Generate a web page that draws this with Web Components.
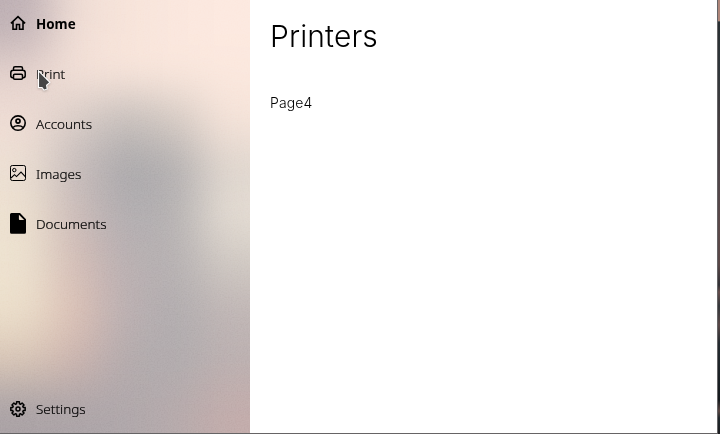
<!DOCTYPE html>
<html lang="en">
<head>
<meta charset="utf-8">
<title>Printers</title>
<style>
html,body{margin:0;width:720px;height:434px;overflow:hidden;background:#fff}
</style>
</head>
<body>
<app-window>
  <nav-pane slot="nav">
    <nav-item icon="home" active>Home</nav-item>
    <nav-item icon="print">Print</nav-item>
    <nav-item icon="account">Accounts</nav-item>
    <nav-item icon="image">Images</nav-item>
    <nav-item icon="document">Documents</nav-item>
    <nav-item icon="settings" slot="footer">Settings</nav-item>
  </nav-pane>
  <content-page heading="Printers">Page4</content-page>
</app-window>
<script>
const make = (host, html) => {
  host.attachShadow({mode:'open'}).innerHTML = html;
};

// Colour samples of the acrylic backdrop, one row per 48px and one column per 50px.
const tones = [
  ['#bfb1b5','#efddd5','#f7e4da','#fae7de','#fce9e0'],
  ['#e3d1cc','#f4e1d8','#f8e5db','#fae7dd','#fbe8de'],
  ['#efddd5','#d9cdc7','#c5bebb','#d4cac3','#f5e3d9'],
  ['#ecdfd3','#c7bdbc','#aaa8ab','#b2afb0','#dfd6ce'],
  ['#ede1d0','#cdbcb9','#b2aeb1','#b6b2b2','#e4dcd3'],
  ['#ede2d0','#d5beb7','#bab0b2','#b6b1b2','#d0c9c3'],
  ['#ecdfcb','#dcc1b6','#bcb0b2','#b1adaf','#c0b6b5'],
  ['#d9c6b7','#cdb5af','#b4abad','#b0acae','#bcb1b1'],
  ['#aba3a6','#ada5a8','#b0a8ab','#b6abac','#c3adac']
];

class AcrylicBackdrop extends HTMLElement {
  connectedCallback() {
    const last = tones.length - 1;
    let cells = '';
    for (let r = -2; r <= last + 2; r++)
      for (let c = -2; c <= 6; c++) {
        const fill = tones[Math.min(last, Math.max(0, r))][Math.min(4, Math.max(0, c))];
        cells += `<rect x="${c*50}" y="${r*48}" width="51" height="49" fill="${fill}"/>`;
      }
    make(this, `<style>:host{display:block;overflow:hidden}svg{display:block}</style>
    <svg width="250" height="434" viewBox="0 0 250 434">
      <defs>
        <filter id="soft" filterUnits="userSpaceOnUse" x="-100" y="-96" width="450" height="626" color-interpolation-filters="sRGB"><feGaussianBlur stdDeviation="22"/></filter>
        <filter id="grain" filterUnits="userSpaceOnUse" x="0" y="0" width="250" height="434" color-interpolation-filters="sRGB"><feTurbulence type="fractalNoise" baseFrequency=".7" numOctaves="2" seed="4"/><feColorMatrix values="1 0 0 0 0  1 0 0 0 0  1 0 0 0 0  0 0 0 0 1"/></filter>
      </defs>
      <g filter="url(#soft)">${cells}</g>
      <rect width="250" height="434" filter="url(#grain)" opacity=".14" style="mix-blend-mode:soft-light"/>
    </svg>`);
  }
}
customElements.define('acrylic-backdrop', AcrylicBackdrop);

const icons = {
  home: '<path d="M1.900 9.300 9 2.600l7.100 6.700M4 8v7.200h3.500v-4.700h3v4.700H14V8" stroke-width="1.600"/>',
  print: '<path d="M4.500 6.200V4.200q0-1.500 1.500-1.500h6q1.500 0 1.500 1.500v2M4.500 13.700H3.700q-1.900 0-1.900-1.900V8.700q0-2.500 2.500-2.500h9.400q2.500 0 2.500 2.500v3.100q0 1.900-1.900 1.900h-.8" stroke-width="1.500"/><rect x="4.500" y="10.200" width="9" height="5.100" rx="1.200" stroke-width="1.500"/>',
  account: '<g transform="translate(0 .6)"><circle cx="9" cy="8.500" r="7.200" stroke-width="1.600"/><circle cx="9" cy="6.500" r="2" stroke-width="1.700"/><path d="M3.800 12.900q1.800-1.700 5.200-1.700t5.200 1.700" stroke-width="1.600"/></g>',
  image: '<g transform="translate(0 1)"><rect x="1.500" y=".5" width="15" height="15" rx="1.800" stroke-width="1"/><circle cx="5.300" cy="5.100" r="1.700" stroke-width="1"/><path d="m2 13 3.500-3.300 2 1.900 4.500-4.600 4.500 4.800" stroke-width="1.100"/></g>',
  document: '<path d="M2.500-1H11l6 6.200V18.300q0 1.500-1.500 1.500h-13Q1 19.800 1 18.300V.5Q1-1 2.500-1ZM9.900.7V5.100q0 .900.900.9H15.200Z" fill="currentColor" fill-rule="evenodd" stroke="none"/>',
  settings: ''
};
{
  // Eight-toothed gear outline.
  let d = '';
  for (let i = 0; i < 8; i++) {
    const base = i * Math.PI / 4;
    for (const [a, r] of [[-.27,5.500],[-.19,7.300],[.19,7.300],[.27,5.500]])
      d += (d ? 'L' : 'M') + (9 + r*Math.sin(base+a)).toFixed(2) + ' ' + (10 - r*Math.cos(base+a)).toFixed(2);
  }
  icons.settings = `<path d="${d}Z" stroke-width="1.500" stroke-linejoin="round"/><circle cx="9" cy="10" r="2" stroke-width="1.500"/>`;
}

class NavItem extends HTMLElement {
  connectedCallback() {
    make(this, `<style>
      :host{display:flex;align-items:center;gap:9px;height:48px;padding-left:9px;font:300 13.500px "Noto Sans",sans-serif;color:#000}
      span{padding-bottom:1px;-webkit-text-stroke:.18px #000}
      :host([active]) span{font-weight:700;font-size:13.400px;-webkit-text-stroke:0}
      svg{overflow:visible;flex:none;margin-top:-2px}
    </style><svg width="18" height="18" fill="none" stroke="currentColor">${icons[this.getAttribute('icon')]}</svg><span><slot></slot></span>`);
  }
}
customElements.define('nav-item', NavItem);

class MousePointer extends HTMLElement {
  connectedCallback() {
    make(this, `<style>:host{display:block;filter:drop-shadow(0 1px 1px #0003)}svg{display:block}</style>
    <svg width="15" height="22" viewBox="0 0 15 22"><path d="M1.500 .8V17.500H5L7 20.200 10.200 18.900 9.600 15.300 12.900 12.300Z" fill="#464646" stroke="#fff" stroke-width="1.100"/></svg>`);
  }
}
customElements.define('mouse-pointer', MousePointer);

class NavPane extends HTMLElement {
  connectedCallback() {
    make(this, `<style>
      :host{display:grid;width:250px;height:433px;position:relative;overflow:hidden}
      acrylic-backdrop,nav{grid-area:1/1}
      nav{display:flex;flex-direction:column;gap:2px;position:relative}
      .footer{margin-top:auto}
      mouse-pointer{position:absolute;left:37px;top:70px}
    </style><acrylic-backdrop></acrylic-backdrop>
    <nav><slot></slot><div class="footer"><slot name="footer"></slot></div></nav><mouse-pointer></mouse-pointer>`);
  }
}
customElements.define('nav-pane', NavPane);

class ContentPage extends HTMLElement {
  connectedCallback() {
    make(this, `<style>
      :host{display:block;box-sizing:border-box;padding:18px 20px;background:#fff;color:#000;font:300 14px/17px Inter,sans-serif}
      h1{margin:0 0 40px;font-weight:300;font-size:30px;line-height:36px;letter-spacing:.12px}
      p{margin:0;letter-spacing:.1px}
    </style><h1>${this.getAttribute('heading')}</h1><p><slot></slot></p>`);
  }
}
customElements.define('content-page', ContentPage);

class AppWindow extends HTMLElement {
  connectedCallback() {
    make(this, `<style>
      :host{display:grid;grid-template-columns:717px 3px;width:720px;height:434px}
      .frame{display:grid;grid-template-columns:250px 1fr;height:433px;border-bottom:1px solid #666465}
      .desk{border-left:1px solid #656466;background:linear-gradient(#ae8579 0 21px,#555 21px 22px,#292f32 22px,#30363a 70px,#443e40 120px,#51464a 180px,#5b494a 225px,#594747 265px,#303035 285px,#654d4b 292px,#33363a 306px,#594747 325px,#242b30 343px,#15191c 400px,#5a4643 411px,#20272b 418px,#1d1d20 434px)}
    </style><div class="frame"><slot name="nav"></slot><slot></slot></div><div class="desk"></div>`);
  }
}
customElements.define('app-window', AppWindow);
</script>
</body>
</html>
